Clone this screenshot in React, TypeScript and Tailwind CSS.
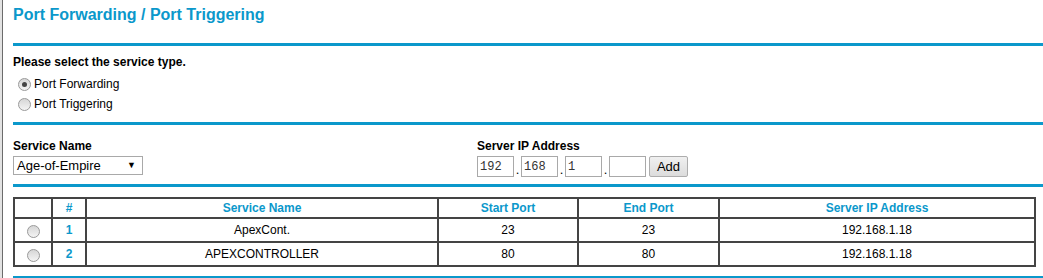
import React from 'react';

/** Blue separator line used between the sections */
function Rule() {
  return <div className="h-[3px] bg-[#0b98cb]" />;
}

/** Old-style gray radio button */
function Radio({ checked = false }: { checked?: boolean }) {
  return (
    <span className="inline-flex h-[13px] w-[13px] items-center justify-center rounded-full border border-[#9a9a9a] bg-[linear-gradient(#d6d6d6,#f4f4f4)]">
      {checked && <span className="h-[5px] w-[5px] rounded-full bg-[#444]" />}
    </span>
  );
}

const rows = [
  { id: 1, name: 'ApexCont.', start: 23, end: 23, ip: '192.168.1.18' },
  { id: 2, name: 'APEXCONTROLLER', start: 80, end: 80, ip: '192.168.1.18' },
];

export default function App() {
  return (
    <div
      className="flex h-[278px] w-[1043px] overflow-hidden bg-white text-black"
      style={{ fontFamily: '"Liberation Sans", Arial, sans-serif' }}
    >
      <div className="w-[2px] shrink-0 bg-[#e2e2e2]" />
      <div className="w-px shrink-0 bg-[#6b6b6b]" />

      <div className="flex-1 pl-[10px]">
        {/* Title */}
        <div className="h-[43px] pt-[6px]">
          <h1 className="text-[16px] leading-[18px] font-bold text-[#0b98cb]">
            Port Forwarding / Port Triggering
          </h1>
        </div>
        <Rule />

        {/* Service type */}
        <div className="h-[76px] pt-[9px]">
          <p className="text-[12px] leading-[14px] font-bold">Please select the service type.</p>
          <div className="mt-[5px] flex h-[20px] items-center gap-[3px] pl-[5px] text-[12px]">
            <Radio checked />
            <span>Port Forwarding</span>
          </div>
          <div className="flex h-[20px] items-center gap-[3px] pl-[5px] text-[12px]">
            <Radio />
            <span>Port Triggering</span>
          </div>
        </div>
        <Rule />

        {/* Service name + server IP */}
        <div className="flex h-[59px] pt-[14px]">
          <div className="w-[464px]">
            <p className="text-[12px] leading-[14px] font-bold">Service Name</p>
            <div className="mt-[3px] flex h-[19px] w-[130px] items-center justify-between border border-[#a9a9a9] pr-[6px] pl-[3px] text-[13px]">
              <span>Age-of-Empire</span>
              <span className="text-[9px]">▼</span>
            </div>
          </div>
          <div>
            <p className="text-[12px] leading-[14px] font-bold">Server IP Address</p>
            <div className="mt-[3px] flex items-end text-[13px]">
              {['192', '168', '1', ''].map((v, i) => (
                <React.Fragment key={i}>
                  {i > 0 && <span className="w-[7px] text-center leading-[14px]">.</span>}
                  <div
                    className="flex h-[21px] w-[37px] items-center border border-[#a9a9a9] px-[2px] text-[12px] text-[#333]"
                    style={{ fontFamily: '"Liberation Mono", "Courier New", monospace' }}
                  >
                    {v}
                  </div>
                </React.Fragment>
              ))}
              <button className="ml-[3px] h-[21px] w-[39px] rounded-[2px] border border-[#adadad] bg-[linear-gradient(#f0f0f0,#dcdcdc)] text-[13px] leading-[19px]">
                Add
              </button>
            </div>
          </div>
        </div>
        <Rule />

        {/* Rules table */}
        <div className="h-[89px] pt-[10px] pr-[7px]">
          <table className="w-full border-collapse border-2 border-[#444] text-center text-[12px]">
            <colgroup>
              <col className="w-[38px]" />
              <col className="w-[34px]" />
              <col className="w-[352px]" />
              <col className="w-[140px]" />
              <col className="w-[141px]" />
              <col />
            </colgroup>
            <thead>
              <tr className="h-[20px] font-bold text-[#0b98cb]">
                <th className="border-2 border-[#444]"></th>
                <th className="border-2 border-[#444]">#</th>
                <th className="border-2 border-[#444]">Service Name</th>
                <th className="border-2 border-[#444]">Start Port</th>
                <th className="border-2 border-[#444]">End Port</th>
                <th className="border-2 border-[#444]">Server IP Address</th>
              </tr>
            </thead>
            <tbody>
              {rows.map((r) => (
                <tr key={r.id} className="h-[24px]">
                  <td className="border-2 border-[#444]">
                    <div className="flex justify-center pt-[2px]">
                      <Radio />
                    </div>
                  </td>
                  <td className="border-2 border-[#444] font-bold text-[#0b98cb]">{r.id}</td>
                  <td className="border-2 border-[#444]">{r.name}</td>
                  <td className="border-2 border-[#444]">{r.start}</td>
                  <td className="border-2 border-[#444]">{r.end}</td>
                  <td className="border-2 border-[#444]">{r.ip}</td>
                </tr>
              ))}
            </tbody>
          </table>
        </div>
        <Rule />
      </div>
    </div>
  );
}
